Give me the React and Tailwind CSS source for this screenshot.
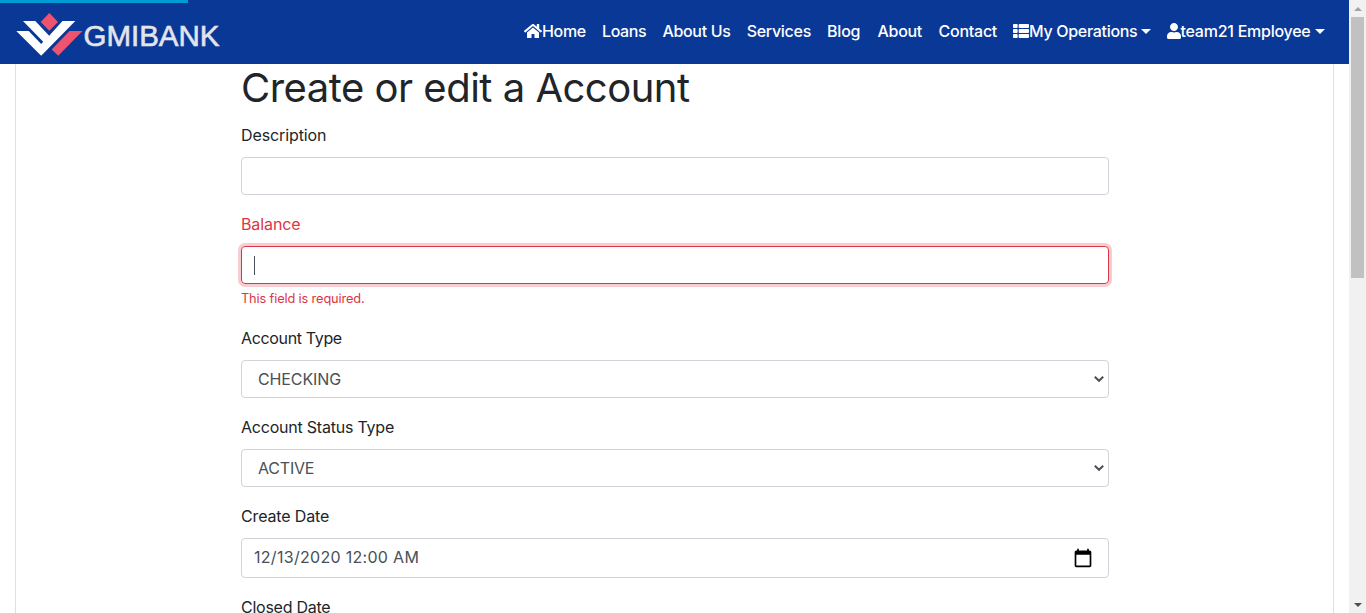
import { FaHome, FaThList, FaUser } from "react-icons/fa";

function Logo() {
  return (
    <svg className="block h-[64px] w-[240px] shrink-0" viewBox="0 0 240 64" aria-label="GMIBANK">
      <path d="M49.3 13 L58 22 L49.3 30.7 L40.7 22Z" fill="#f0536f" />
      <path d="M23 21h12.3l13.9 14.7L62.5 21h12.8L41.2 55.7 16.3 31h12.4l12.5 13 2-2.2Z" fill="#fff" />
      <path d="M69.5 31h13L58.3 55.7 51.7 49.500Z" fill="#f0536f" />
      <text x="83.5" y="45.600" fontSize="30" textLength="136" lengthAdjust="spacingAndGlyphs" fill="#e4e4ec" stroke="#e4e4ec" strokeWidth="0.6" className="font-['Liberation_Sans',sans-serif]">GMIBANK</text>
    </svg>
  );
}

function NavItem({ icon, label, caret, className }) {
  return (
    <a className={`flex h-10 shrink-0 items-center whitespace-nowrap pl-2 ${className}`}>
      {icon}
      <span>{label}</span>
      {caret && (
        <svg className="ml-1 h-[5px] w-[10px]" viewBox="0 0 10 5" fill="#fff">
          <path d="M0 0h10L5 5Z" />
        </svg>
      )}
    </a>
  );
}

function Label({ children, className = "" }) {
  return <label className={`mb-[10px] block h-6 whitespace-nowrap text-[16px] leading-6 ${className}`}>{children}</label>;
}

function SelectBox({ value, className }) {
  return (
    <div className="flex h-[38px] items-center justify-between rounded border border-[#ced4da] pl-4 pr-1 text-[#495057]">
      <span className={className}>{value}</span>
      <svg className="h-[10px] w-[10px]" viewBox="0 0 10 10" fill="none" stroke="#495057" strokeWidth="2">
        <path d="M0.8 2.8 5 6.8l4.2-4" />
      </svg>
    </div>
  );
}

export default function App() {
  return (
    <div className="flex h-[613px] w-[1366px] overflow-hidden bg-white font-['Inter','Liberation_Sans',sans-serif] text-[16px] text-[#212529]">
      <div className="flex w-[1349px] flex-col">
        <header className="relative flex h-16 shrink-0 items-center bg-[#0a3896] font-medium text-white">
          <div className="absolute left-0 top-0 h-[3px] w-[188px] bg-[#009cd8]" />
          <Logo />
          <nav className="mb-[2px] ml-auto flex pr-4">
            <NavItem className="w-[78px] tracking-[-0.35px]" icon={<FaHome className="h-4 w-[18px]" />} label="Home" />
            <NavItem className="w-[60.5px] tracking-[-0.4px]" label="Loans" />
            <NavItem className="w-[84.2px] tracking-[-0.35px]" label="About Us" />
            <NavItem className="w-[80.3px] tracking-[-0.3px]" label="Services" />
            <NavItem className="w-[50.5px] tracking-[-0.2px]" label="Blog" />
            <NavItem className="w-[61px] tracking-[-0.3px]" label="About" />
            <NavItem className="w-[74.5px] tracking-[-0.25px]" label="Contact" />
            <NavItem className="w-[153.5px] tracking-[-0.3px]" icon={<FaThList className="h-4 w-4" />} label="My Operations" caret />
            <NavItem className="w-[174.5px] tracking-[-0.25px]" icon={<FaUser className="h-4 w-[14px] shrink-0" />} label="team21 Employee" caret />
          </nav>
        </header>
        <main className="mx-[15px] h-[549px] overflow-hidden border-x border-[#dfdfdf]">
          <form className="ml-[225px] w-[868px]">
            <h2 className="mb-[11px] h-12 whitespace-nowrap text-[40px] leading-[48px] tracking-[-0.5px]">Create or edit a Account</h2>
            <Label className="tracking-[-0.1px]">Description</Label>
            <div className="mb-[17px] h-[38px] rounded border border-[#ced4da]" />
            <Label className="tracking-[-0.1px] text-[#dc3545]">Balance</Label>
            <div className="flex h-[38px] items-center rounded border border-[#dc3545] pl-3 shadow-[0_0_0_3px_#f8cdd1]">
              <span className="h-[19px] w-px bg-[#495057]" />
            </div>
            <p className="mb-4 mt-[3px] h-[23px] whitespace-nowrap text-[12.8px] leading-[23px] tracking-[-0.14px] text-[#dc3545]">This field is required.</p>
            <Label className="tracking-[-0.35px]">Account Type</Label>
            <SelectBox value="CHECKING" className="tracking-[-0.12px]" />
            <Label className="mt-[17px] tracking-[-0.22px]">Account Status Type</Label>
            <SelectBox value="ACTIVE" className="tracking-[-0.2px]" />
            <Label className="mt-[17px] tracking-[-0.15px]">Create Date</Label>
            <div className="flex h-10 items-center justify-between rounded border border-[#ced4da] pl-3 pr-[15px] text-[#495057]">
              <span className="pb-[2px] tracking-[0.3px]">12/13/2020 12:00 AM</span>
              <svg className="h-5 w-5" viewBox="0 0 24 24" fill="#000">
                <path d="M20 3h-1V1h-2v2H7V1H5v2H4c-1.100 0-2 .9-2 2v16c0 1.100.9 2 2 2h16c1.100 0 2-.9 2-2V5c0-1.100-.9-2-2-2zm0 18H4V8h16v13z" />
              </svg>
            </div>
            <Label className="mt-[17px] tracking-[-0.25px]">Closed Date</Label>
          </form>
        </main>
      </div>
      <div className="flex w-[17px] flex-col items-center bg-[#f1f1f1]">
        <div className="flex h-[17px] items-center">
          <div className="h-0 w-0 border-x-4 border-b-4 border-x-transparent border-b-[#a3a3a3]" />
        </div>
        <div className="h-[261px] w-[13px] bg-[#c1c1c1]" />
        <div className="mt-auto flex h-[17px] items-center">
          <div className="h-0 w-0 border-x-4 border-t-4 border-x-transparent border-t-[#505050]" />
        </div>
      </div>
    </div>
  );
}
